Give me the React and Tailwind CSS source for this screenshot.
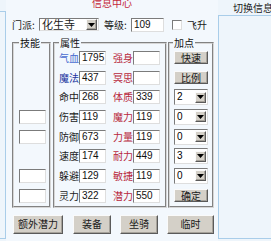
import React from 'react'

const cjk = "font-['Noto_Sans_CJK_SC','Noto_Sans',sans-serif]"
const num = "font-['Liberation_Sans',Arial,sans-serif]"

// sunken white box used for inputs / selects
const sunken =
  'bg-white border border-t-[#7b7b7b] border-l-[#7b7b7b] border-b-[#dedede] border-r-[#dedede]'
// raised grey button look
const raised =
  'bg-[#d4d0c8] border border-t-[#fafafa] border-l-[#fafafa] border-b-[#5a5a5a] border-r-[#5a5a5a] shadow-[inset_-1px_-1px_0_#a6a29a]'

const rows = [
  { a: '气血', aColor: 'text-[#4a6cd0]', av: '1795', b: '强身', bv: '', add: { btn: '快速' } },
  { a: '魔法', aColor: 'text-[#22349e]', av: '437', b: '冥思', bv: '', add: { btn: '比例' } },
  { a: '命中', aColor: 'text-[#1c1c1c]', av: '268', b: '体质', bv: '339', add: { sel: '2' } },
  { a: '伤害', aColor: 'text-[#1c1c1c]', av: '119', b: '魔力', bv: '119', skill: true, add: { sel: '0' } },
  { a: '防御', aColor: 'text-[#1c1c1c]', av: '673', b: '力量', bv: '119', skill: true, add: { sel: '0' } },
  { a: '速度', aColor: 'text-[#1c1c1c]', av: '174', b: '耐力', bv: '449', add: { sel: '3' } },
  { a: '躲避', aColor: 'text-[#1c1c1c]', av: '129', b: '敏捷', bv: '119', skill: true, add: { sel: '0' } },
  { a: '灵力', aColor: 'text-[#1c1c1c]', av: '322', b: '潜力', bv: '550', skill: true, add: { btn: '确定' } },
]

function Arrow() {
  return (
    <span className={`w-[11px] h-[11px] shrink-0 flex items-center justify-center ${raised}`}>
      <svg width="7" height="4" viewBox="0 0 7 4">
        <path d="M0 0h7L3.5 4z" fill="#000" />
      </svg>
    </span>
  )
}

function Field({ value, className = '' }) {
  return (
    <div className={`h-[14px] flex items-center pl-[2px] text-[10px] text-[#111] ${num} ${sunken} ${className}`}>
      {value}
    </div>
  )
}

function Btn({ label, className = '' }) {
  return (
    <div className={`flex items-center justify-center text-[10px] text-[#1a1a1a] ${raised} ${className}`}>
      {label}
    </div>
  )
}

function Select({ value, className = '' }) {
  return (
    <div className={`flex items-center justify-between pl-[2px] pr-[1px] ${sunken} ${className}`}>
      <span>{value}</span>
      <Arrow />
    </div>
  )
}

function Group({ title, className = '', legendClass = '', children }) {
  return (
    <fieldset className={`border-2 [border-style:groove] border-[#d6d6d6] ${className}`}>
      <legend className={`px-[1px] h-[10px] leading-[10px] text-[10px] text-[#111] ${legendClass}`}>{title}</legend>
      {children}
    </fieldset>
  )
}

export default function App() {
  return (
    <div className={`w-[271px] h-[241px] overflow-hidden bg-[#eef5fb] flex leading-none ${cjk}`}>
      {/* left edge of the tab strip */}
      <div className="w-[6px] shrink-0 flex flex-col">
        <div className="h-[11px]" />
        <div className="flex-1 border-t border-r border-b border-[#a9cde9] mb-[2px]" />
      </div>

      {/* active panel */}
      <div className="w-[212px] shrink-0 flex flex-col bg-[#f3f8fd]">
        <div className="h-[8px] flex items-end justify-center text-[10px] leading-[10px] text-[#c4283a]">
          信息中心
        </div>

        {/* 门派 / 等级 row */}
        <div className="mt-[10px] h-[13px] flex items-center pl-[6px] text-[10px] text-[#1a1a1a]">
          <span className="w-[27px]">门派:</span>
          <div className={`w-[60px] h-[13px] flex items-center justify-between pl-[2px] pr-[1px] text-[11px] ${sunken}`}>
            <span>化生寺</span>
            <Arrow />
          </div>
          <span className="ml-[5px] w-[27px]">等级:</span>
          <Field value="109" className="w-[33px] h-[13px]" />
          <span className={`ml-[8px] w-[10px] h-[10px] ${sunken}`} />
          <span className="ml-[5px]">飞升</span>
        </div>

        {/* groups */}
        <div className="mt-[7px] flex pl-[6px] text-[10px]">
          <Group title="技能" className="w-[39px]" legendClass="ml-[5px]">
            {rows.map((r, i) => (
              <div key={i} className="h-[19.7px] flex items-center pl-[5px]">
                {r.skill && <Field value="" className="w-[27px]" />}
              </div>
            ))}
          </Group>

          <Group title="属性" className="ml-[2px] w-[114px]" legendClass="ml-[4px]">
            {rows.map((r, i) => (
              <div key={i} className="h-[19.7px] flex items-center pl-[4px]">
                <span className={`w-[20px] ${r.aColor}`}>{r.a}</span>
                <Field value={r.av} className="w-[27px]" />
                <span className="ml-[7px] w-[20px] text-[#b8283c]">{r.b}</span>
                <Field value={r.bv} className="w-[27px]" />
              </div>
            ))}
          </Group>

          <Group title="加点" className="ml-[1px] w-[46px]" legendClass="ml-[3px]">
            {rows.map((r, i) => (
              <div key={i} className="h-[19.7px] flex items-center pl-[4px]">
                {r.add.btn ? (
                  <Btn label={r.add.btn} className="w-[34px] h-[13px]" />
                ) : (
                  <Select value={r.add.sel} className={`w-[34px] h-[16px] text-[10px] ${num}`} />
                )}
              </div>
            ))}
          </Group>
        </div>

        {/* bottom buttons */}
        <div className="mt-[7px] flex pl-[7px]">
          <Btn label="额外潜力" className="w-[50px] h-[19px]" />
          <Btn label="装备" className="ml-[10px] w-[38px] h-[19px]" />
          <Btn label="坐骑" className="ml-[9px] w-[38px] h-[19px]" />
          <Btn label="临时" className="ml-[9px] w-[47px] h-[19px]" />
        </div>
      </div>

      {/* next tab */}
      <div className="flex-1 flex flex-col">
        <div className="h-[15px] pl-[15px] pt-[3px] text-[10px] text-[#222] whitespace-nowrap">切换信息</div>
        <div className="flex-1 border-t border-l border-b border-[#a9cde9] mb-[2px]" />
      </div>
    </div>
  )
}
